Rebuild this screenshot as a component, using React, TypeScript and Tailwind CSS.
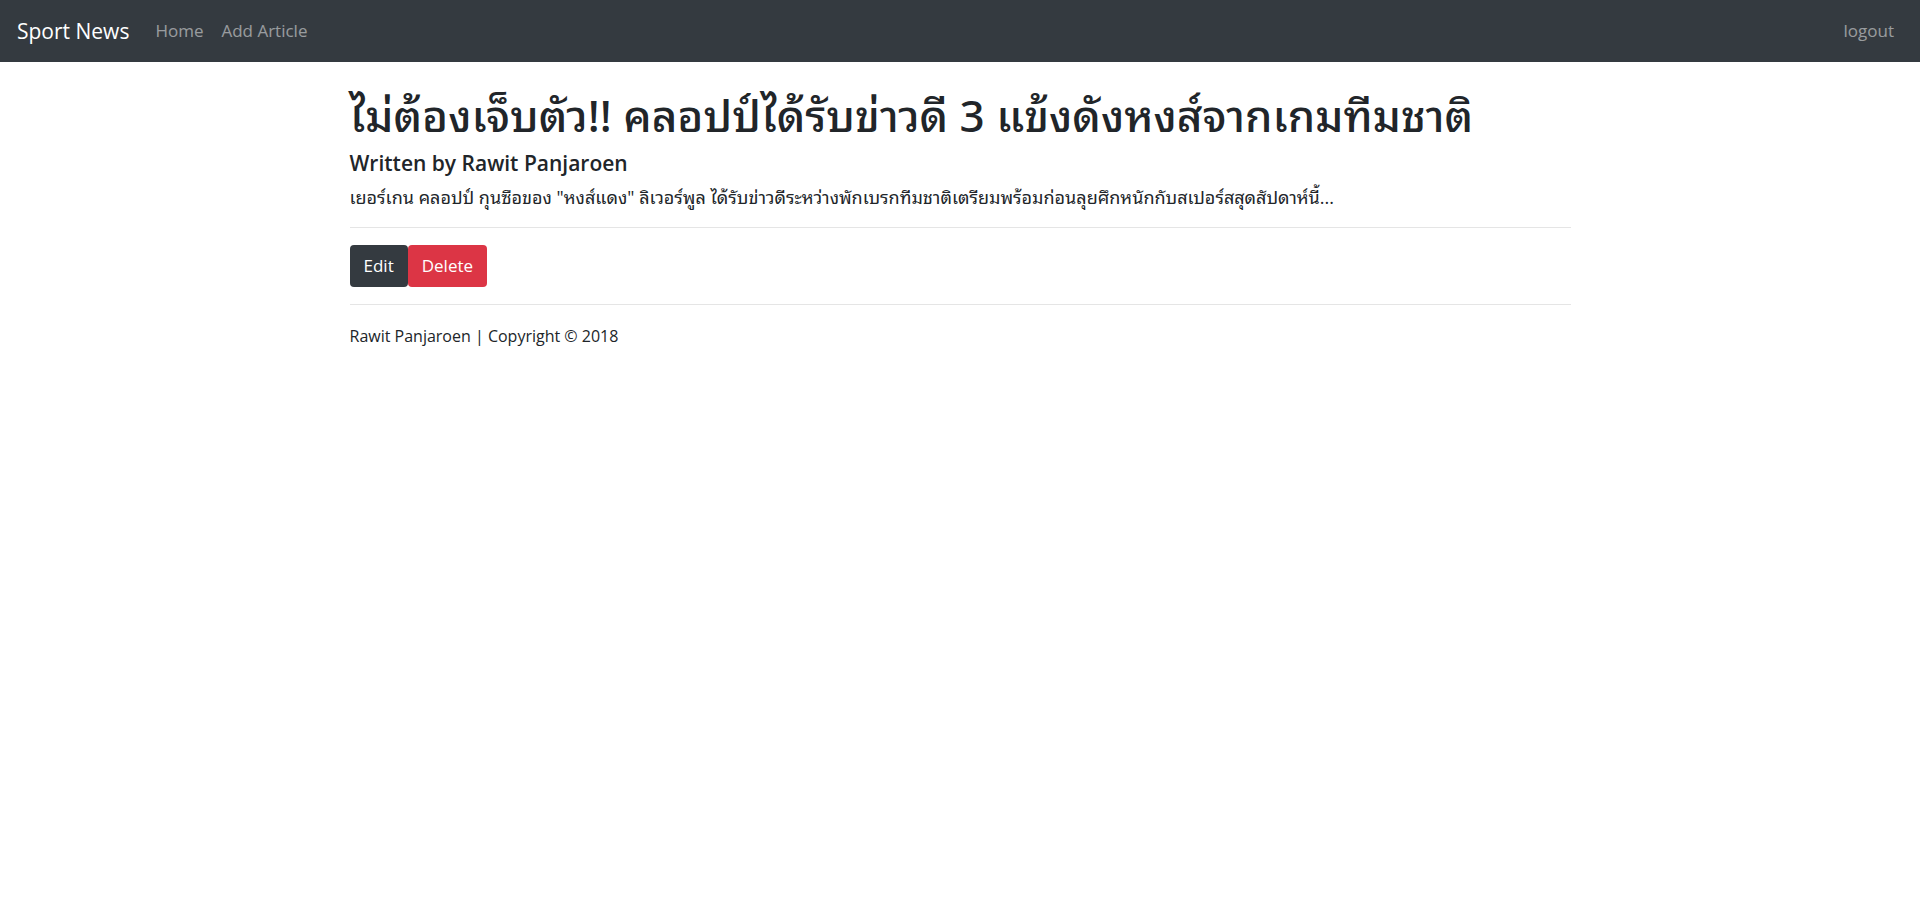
export default function App() {
  return (
    <div className="min-h-screen bg-white font-['Open_Sans','Noto_Sans_Thai_Looped','Loma','Noto_Sans_Thai','Noto_Sans',sans-serif] text-[17px] leading-[26px] text-[#212529]">
      <nav className="flex items-center bg-[#343a40] px-[17px] py-[9px]">
        <a href="#" className="mr-[17px] text-[21px] text-white">Sport News</a>
        <a href="#" className="p-[9px] text-white/50">Home</a>
        <a href="#" className="p-[9px] text-white/50">Add Article</a>
        <a href="#" className="ml-auto p-[9px] text-white/50">logout</a>
      </nav>
      <main className="mx-auto max-w-[1253px] px-4 pt-[27px]">
        <h1 className="mb-2 font-['Noto_Sans','Noto_Sans_Thai_Looped','Loma','Noto_Sans_Thai',sans-serif] text-[44px] leading-[53px] font-medium">ไม่ต้องเจ็บตัว!! คลอปป์ได้รับข่าวดี 3 แข้งดังหงส์จากเกมทีมชาติ</h1>
        <h2 className="mb-2 text-[21px] font-semibold">Written by Rawit Panjaroen</h2>
        <p className="text-lg leading-[26px]">เยอร์เกน คลอปป์ กุนซือของ "หงส์แดง" ลิเวอร์พูล ได้รับข่าวดีระหว่างพักเบรกทีมชาติเตรียมพร้อมก่อนลุยศึกหนักกับสเปอร์สสุดสัปดาห์นี้...</p>
        <hr className="my-[17px] border-black/10" />
        <div className="flex">
          <a href="#" className="rounded bg-[#343a40] px-[14px] py-2 text-white">Edit</a>
          <button type="button" className="rounded bg-[#dc3545] px-[14px] py-2 text-white">Delete</button>
        </div>
        <hr className="my-[17px] border-black/10" />
        <footer className="text-base leading-7">Rawit Panjaroen | Copyright © 2018</footer>
      </main>
    </div>
  );
}
